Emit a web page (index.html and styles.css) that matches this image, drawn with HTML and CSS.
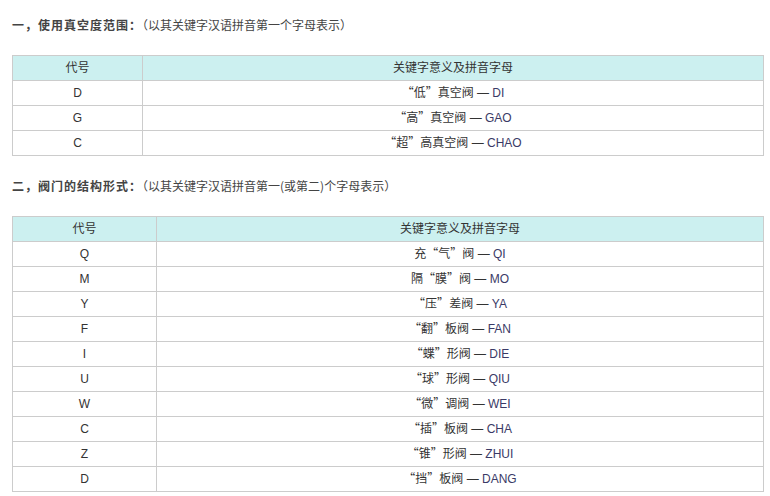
FILE: index.html
```html
<!DOCTYPE html>
<html lang="zh-CN">
<head>
<meta charset="utf-8">
<title>阀门型号</title>
<link rel="stylesheet" href="styles.css">
</head>
<body>
<div class="page">
  <p class="title"><strong>一，使用真空度范围：</strong>（以其关键字汉语拼音第一个字母表示）</p>
  <table class="code-table t1">
    <colgroup><col class="c1"><col></colgroup>
    <tr class="head"><td>代号</td><td>关键字意义及拼音字母</td></tr>
    <tr><td>D</td><td><span class="q">“</span>低<span class="q">”</span>真空阀 — <span class="py">DI</span></td></tr>
    <tr><td>G</td><td><span class="q">“</span>高<span class="q">”</span>真空阀 — <span class="py">GAO</span></td></tr>
    <tr><td>C</td><td><span class="q">“</span>超<span class="q">”</span>高真空阀 — <span class="py">CHAO</span></td></tr>
  </table>
  <p class="title"><strong>二，阀门的结构形式：</strong>（以其关键字汉语拼音第一(或第二)个字母表示）</p>
  <table class="code-table t2">
    <colgroup><col class="c1"><col></colgroup>
    <tr class="head"><td>代号</td><td>关键字意义及拼音字母</td></tr>
    <tr><td>Q</td><td>充<span class="q">“</span>气<span class="q">”</span>阀 — <span class="py">QI</span></td></tr>
    <tr><td>M</td><td>隔<span class="q">“</span>膜<span class="q">”</span>阀 — <span class="py">MO</span></td></tr>
    <tr><td>Y</td><td><span class="q">“</span>压<span class="q">”</span>差阀 — <span class="py">YA</span></td></tr>
    <tr><td>F</td><td><span class="q">“</span>翻<span class="q">”</span>板阀 — <span class="py">FAN</span></td></tr>
    <tr><td>I</td><td><span class="q">“</span>蝶<span class="q">”</span>形阀 — <span class="py">DIE</span></td></tr>
    <tr><td>U</td><td><span class="q">“</span>球<span class="q">”</span>形阀 — <span class="py">QIU</span></td></tr>
    <tr><td>W</td><td><span class="q">“</span>微<span class="q">”</span>调阀 — <span class="py">WEI</span></td></tr>
    <tr><td>C</td><td><span class="q">“</span>插<span class="q">”</span>板阀 — <span class="py">CHA</span></td></tr>
    <tr><td>Z</td><td><span class="q">“</span>锥<span class="q">”</span>形阀 — <span class="py">ZHUI</span></td></tr>
    <tr><td>D</td><td><span class="q">“</span>挡<span class="q">”</span>板阀 — <span class="py">DANG</span></td></tr>
  </table>
</div>
</body>
</html>
```
FILE: styles.css
```css
html, body {
  margin: 0;
  padding: 0;
  background: #fff;
}
body {
  font-family: "Liberation Sans", "Noto Sans CJK SC", sans-serif;
  font-size: 12px;
  color: #333;
}
.page {
  padding: 13px 0 0 12px;
}
.title {
  margin: 0;
  height: 24px;
  line-height: 24px;
  color: #444;
  white-space: nowrap;
  font-family: "Noto Sans CJK SC", sans-serif;
}
.title strong {
  font-weight: bold;
  color: #444;
  letter-spacing: 1px;
}
.code-table {
  border-collapse: collapse;
  width: 752px;
  table-layout: fixed;
  margin: 18px 0;
}
.code-table td {
  border: 1px solid #ccc;
  height: 24px;
  padding: 0;
  line-height: 24px;
  text-align: center;
  color: #333;
}
.code-table .head td {
  background: #ccf0f0;
}
.t1 .c1 { width: 130px; }
.t2 .c1 { width: 144px; }
.q {
  font-family: "Noto Sans CJK SC", sans-serif;
  line-height: 1;
}
.py { color: #3a3a66; }
```
